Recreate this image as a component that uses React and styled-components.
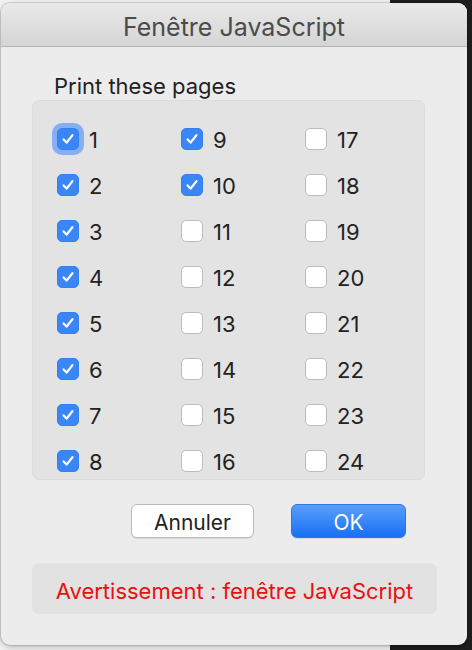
import React from 'react';
import styled, {createGlobalStyle} from "styled-components";

const GlobalStyle = createGlobalStyle`
  html, body {
    margin: 0;
    padding: 0;
  }
  body {
    width: 472px;
    height: 650px;
    overflow: hidden;
    background: linear-gradient(to right, #f2f2f2 390px, #1e1e1e 390px);
    font-family: Inter, "Noto Sans", sans-serif;
  }
`;

const checked = [1, 2, 3, 4, 5, 6, 7, 8, 9, 10];

const CheckIcon = () => (
    <svg width="14" height="14" viewBox="0 0 14 14">
        <polyline points="2.6,7.4 5.6,10.6 11.4,3.2" fill="none" stroke="#fff" strokeWidth="2.2"
                  strokeLinecap="round" strokeLinejoin="round"/>
    </svg>
);

const PageOption = ({page}) => {
    const on = checked.includes(page);
    return (
        <Option>
            <Box checked={on} focused={page === 1}>
                {on && <CheckIcon/>}
            </Box>
            <Label>{page}</Label>
        </Option>
    );
};

const App = () => {
    // column order: 1-8, 9-16, 17-24
    const pages = [];
    for (let row = 0; row < 8; row++) {
        for (let col = 0; col < 3; col++) {
            pages.push(col * 8 + row + 1);
        }
    }

    return (
        <>
            <GlobalStyle/>
            <Window>
                <TitleBar>Fenêtre JavaScript</TitleBar>
                <Content>
                    <Heading>Print these pages</Heading>
                    <GroupBox>
                        {pages.map(p => <PageOption key={p} page={p}/>)}
                    </GroupBox>
                    <ButtonRow>
                        <Button>Annuler</Button>
                        <Button primary>OK</Button>
                    </ButtonRow>
                    <Warning>Avertissement : fenêtre JavaScript</Warning>
                </Content>
            </Window>
        </>
    );
};

const Window = styled.div`
  margin: 3px 0 0 1px;
  width: 466px;
  height: 642px;
  border-radius: 9px;
  background: #ececec;
  box-shadow: 0 0 0 1px rgba(0, 0, 0, .12), 0 2px 6px rgba(0, 0, 0, .25);
  overflow: hidden;
  display: flex;
  flex-direction: column;
`;

const TitleBar = styled.div`
  height: 44px;
  flex-shrink: 0;
  display: flex;
  align-items: center;
  justify-content: center;
  padding-top: 4px;
  box-sizing: border-box;
  background: linear-gradient(to bottom, #e9e9e9, #d5d5d5);
  border-bottom: 1px solid #b4b4b4;
  color: #4b4b4b;
  font-size: 25px;
`;

const Content = styled.div`
  display: flex;
  flex-direction: column;
  padding: 0 0 0 31px;
`;

const Heading = styled.div`
  margin: 27px 0 0 22px;
  height: 25px;
  line-height: 25px;
  font-size: 22px;
  color: #222;
`;

const GroupBox = styled.div`
  margin-top: 1px;
  width: 393px;
  height: 380px;
  box-sizing: border-box;
  padding: 27px 0 0 24px;
  background: #e3e3e3;
  border: 1px solid #dcdcdc;
  border-radius: 7px;
  display: grid;
  grid-template-columns: repeat(3, 124px);
  grid-auto-rows: 22px;
  row-gap: 24px;
`;

const Option = styled.div`
  display: flex;
  align-items: center;
  gap: 10px;
`;

const Box = styled.div`
  position: relative;
  width: 22px;
  height: 22px;
  box-sizing: border-box;
  border-radius: 5px;
  display: flex;
  align-items: center;
  justify-content: center;
  background: ${props => props.checked ? '#3b86f7' : '#fff'};
  border: 1px solid ${props => props.checked ? '#3580f0' : '#bcbcbc'};
  box-shadow: ${props => props.focused ? '0 0 0 5px #86aff3' : 'none'};
`;

const Label = styled.span`
  font-size: 22px;
  color: #222;
  line-height: 22px;
  padding-top: 1px;
`;

const ButtonRow = styled.div`
  display: flex;
  margin: 24px 0 0 99px;
  gap: 37px;
`;

const Button = styled.div`
  width: ${props => props.primary ? '115px' : '123px'};
  height: 34px;
  box-sizing: border-box;
  padding-top: 2px;
  border-radius: 6px;
  display: flex;
  align-items: center;
  justify-content: center;
  font-size: 21px;
  color: ${props => props.primary ? '#fff' : '#222'};
  background: ${props => props.primary
          ? 'linear-gradient(to bottom, #5a9efa, #1870f5)'
          : '#fff'};
  border: 1px solid ${props => props.primary ? '#2a78f0' : '#bababa'};
  box-shadow: 0 1px 1px rgba(0, 0, 0, .08);
`;

const Warning = styled.div`
  margin-top: 25px;
  width: 405px;
  height: 51px;
  border-radius: 7px;
  background: #e2e2e2;
  display: flex;
  align-items: center;
  justify-content: center;
  padding-top: 4px;
  box-sizing: border-box;
  color: #e8110f;
  font-size: 22px;
`;

export default App;
